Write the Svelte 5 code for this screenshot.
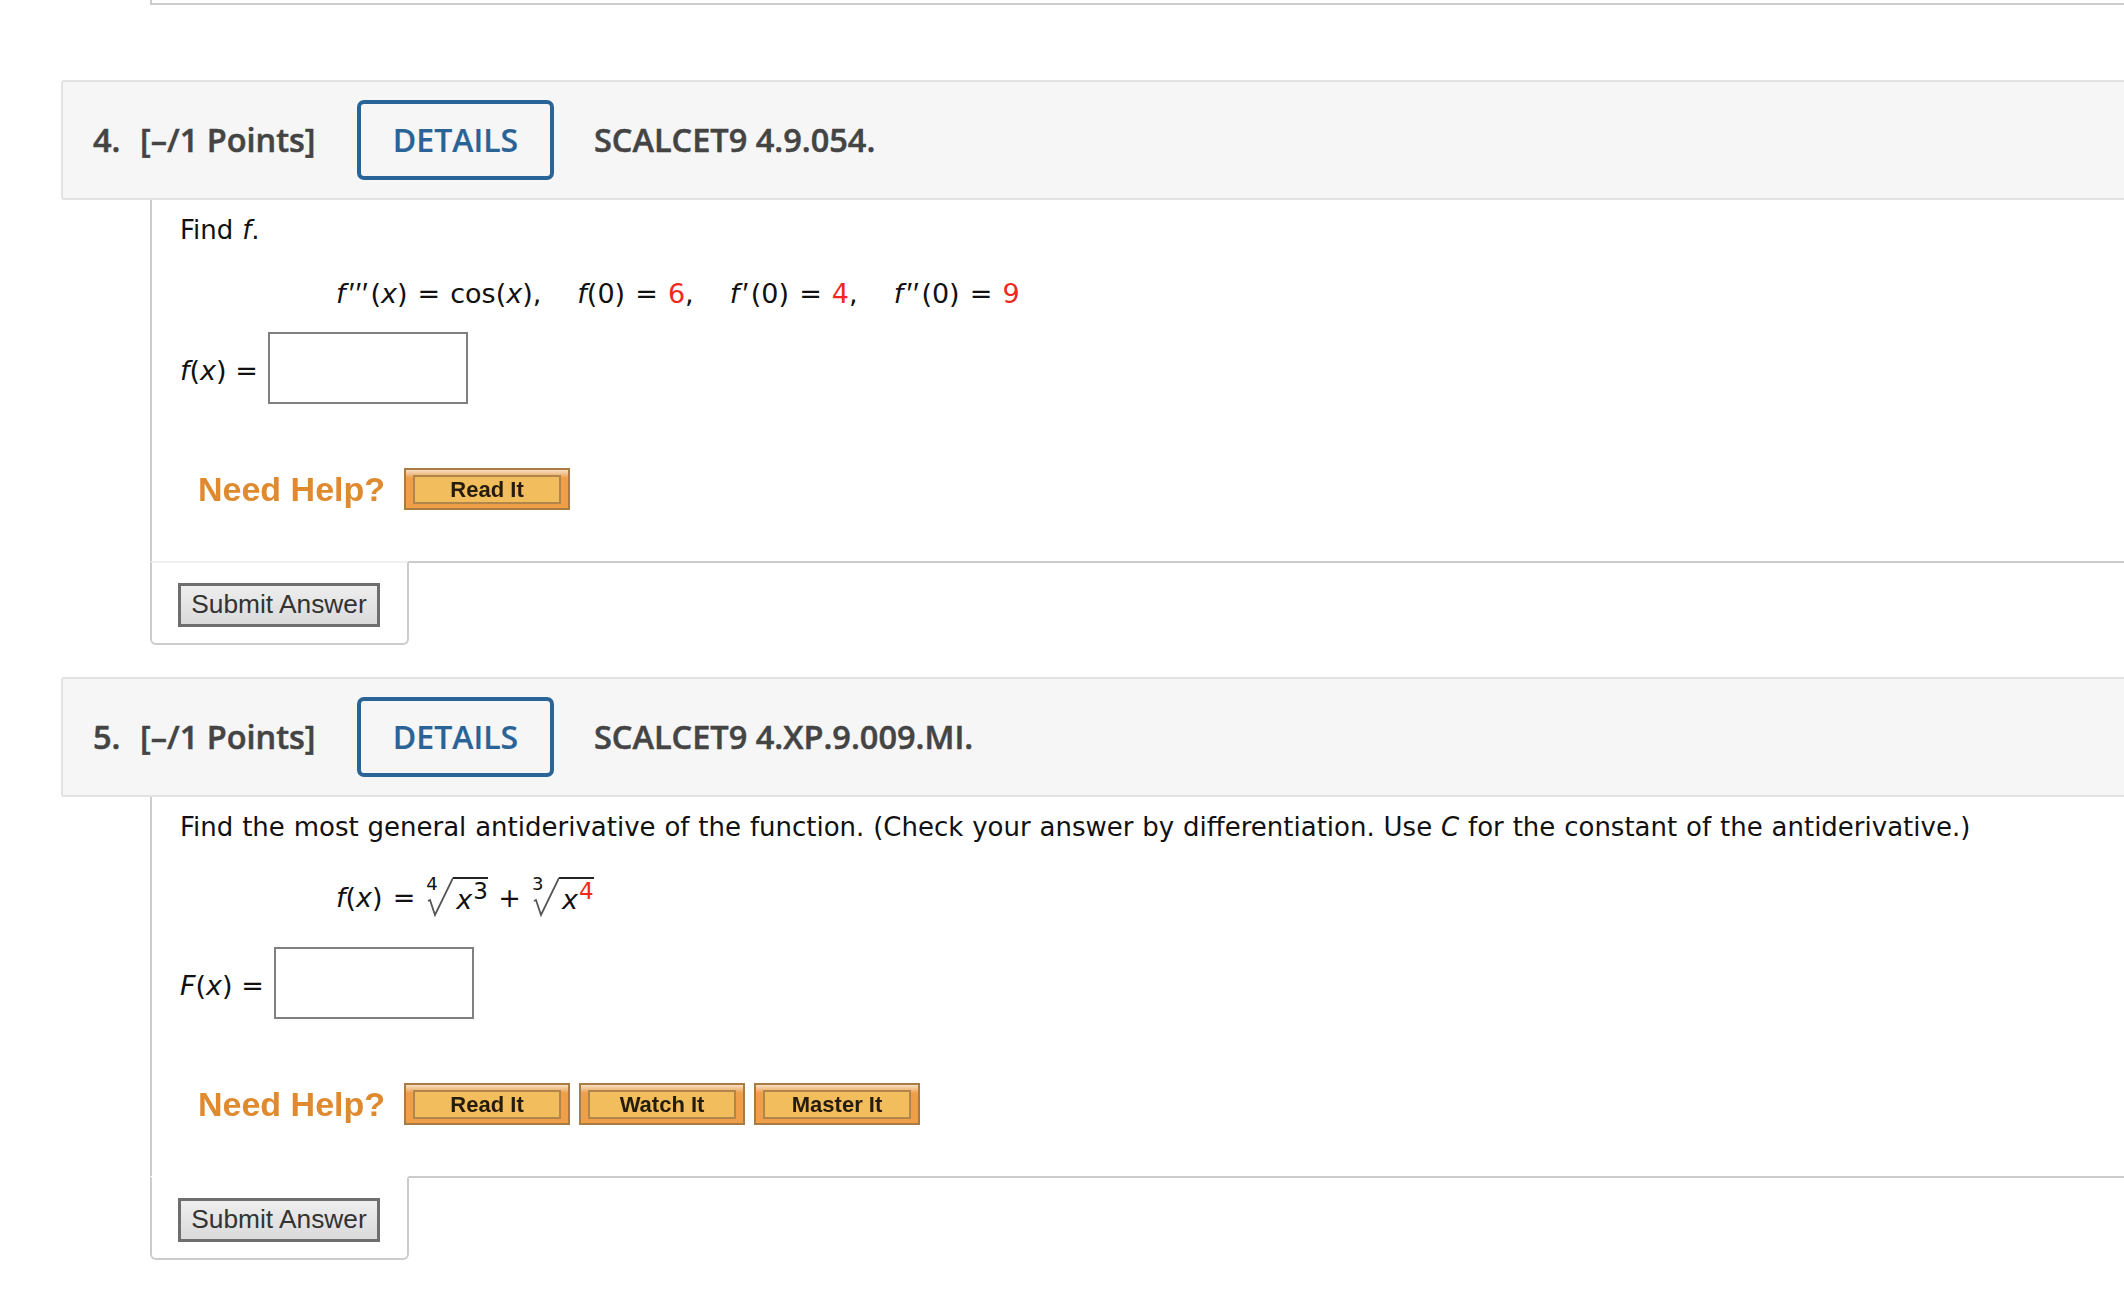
<script>
    const helpFour = ["Read It"];
    const helpFive = ["Read It", "Watch It", "Master It"];
</script>

{#snippet header(num, code)}
    <header class="q-header">
        <span class="num">{num}.</span>
        <span class="points">[–/1 Points]</span>
        <button type="button" class="details">DETAILS</button>
        <span class="code">{code}</span>
    </header>
{/snippet}

{#snippet help(links)}
    <div class="help">
        <span class="need">Need Help?</span>
        {#each links as link}
            <span class="help-btn"><span class="help-inner">{link}</span></span>
        {/each}
    </div>
{/snippet}

{#snippet footer()}
    <div class="footer">
        <div class="tab"><button type="button" class="submit">Submit Answer</button></div>
        <div class="rest"></div>
    </div>
{/snippet}

{#snippet root(index, power, red)}
    <span class="root">
        <span class="index">{index}</span>
        <svg class="radical" width="28" height="40" viewBox="0 0 28 40">
            <path d="M3 24 L5 23 L10 38 L28 1" fill="none" stroke="#555" stroke-width="1.8" />
        </svg>
        <span class="radicand"><i>x</i><sup class:red>{power}</sup></span>
    </span>
{/snippet}

<div class="page">
    <div class="prev"></div>

    <section class="question first">
        {@render header(4, "SCALCET9 4.9.054.")}
        <div class="content">
            <p class="prompt">Find <i>f</i>.</p>
            <div class="math terms">
                <span><i>f<span class="prime">′′′</span></i>(<i>x</i>) = cos(<i>x</i>),</span>
                <span><i>f</i>(0) = <b class="red">6</b>,</span>
                <span><i>f<span class="prime">′</span></i>(0) = <b class="red">4</b>,</span>
                <span><i>f<span class="prime">′′</span></i>(0) = <b class="red">9</b></span>
            </div>
            <div class="answer">
                <span class="label"><i>f</i>(<i>x</i>) = </span>
                <input type="text" />
            </div>
            {@render help(helpFour)}
        </div>
        {@render footer()}
    </section>

    <section class="question second">
        {@render header(5, "SCALCET9 4.XP.9.009.MI.")}
        <div class="content">
            <p class="prompt">Find the most general antiderivative of the function. (Check your answer by differentiation. Use <i>C</i> for the constant of the antiderivative.)</p>
            <div class="math radicals">
                <span class="lhs"><i>f</i>(<i>x</i>) = </span>
                {@render root(4, 3, false)}
                <span class="plus">+</span>
                {@render root(3, 4, true)}
            </div>
            <div class="answer">
                <span class="label"><i>F</i>(<i>x</i>) = </span>
                <input type="text" />
            </div>
            {@render help(helpFive)}
        </div>
        {@render footer()}
    </section>
</div>

<style>
    :global(body) {
        margin: 0;
        background: #fff;
        overflow: hidden;
    }

    .page {
        width: 2124px;
        height: 1298px;
        overflow: hidden;
        font-family: "DejaVu Sans", Verdana, sans-serif;
        color: #111;
    }

    .prev {
        height: 3px;
        margin-left: 150px;
        border-left: 2px solid #ccc;
        border-bottom: 2px solid #ccc;
    }

    .question {
        margin-top: 75px;
    }

    .question.second {
        margin-top: 32px;
    }

    .q-header {
        display: flex;
        align-items: center;
        height: 116px;
        margin-left: 61px;
        margin-right: -10px;
        padding-left: 30px;
        background: #f6f6f6;
        border: 2px solid #e2e2e2;
        border-radius: 3px;
        font-family: "Open Sans", sans-serif;
        font-weight: 600;
        font-size: 32.5px;
        color: #444;
        -webkit-text-stroke: 0.5px #444;
    }

    .num,
    .points,
    .code {
        padding-bottom: 2px;
    }

    .num {
        width: 47px;
    }

    .points {
        width: 217px;
    }

    .details {
        box-sizing: border-box;
        width: 197px;
        height: 80px;
        margin-right: 40px;
        padding: 0 0 2px;
        background: none;
        border: 4px solid #2a6496;
        border-radius: 7px;
        font: inherit;
        font-size: 32px;
        color: #2a6496;
        -webkit-text-stroke: 0.2px #2a6496;
    }

    .content {
        margin-left: 150px;
        padding-left: 28px;
        border-left: 2px solid #ccc;
        height: 361px;
        font-size: 27px;
    }

    .second .content {
        height: 379px;
    }

    .prompt {
        margin: 0;
        padding-top: 14px;
        line-height: 32px;
        font-size: 26px;
        word-spacing: 0.6px;
    }

    .math {
        margin-left: 156px;
        line-height: 32px;
        word-spacing: 1.5px;
    }

    .terms {
        display: flex;
        gap: 36px;
        margin-top: 32px;
    }

    .prime {
        margin: 0 3px 0 2px;
        font-family: "Liberation Sans", Arial, sans-serif;
        font-size: 30px;
        line-height: 0;
        letter-spacing: 1px;
    }

    .radicals {
        display: flex;
        align-items: flex-end;
        gap: 10px;
        margin-top: 34px;
    }

    .lhs {
        margin-bottom: 3px;
    }

    .red {
        color: #f0291c;
        font-weight: normal;
    }

    .answer {
        display: flex;
        align-items: flex-end;
        gap: 10px;
        margin-top: 22px;
    }

    .second .answer {
        margin-top: 30px;
    }

    .label {
        padding-bottom: 17px;
        line-height: 32px;
    }

    input {
        box-sizing: border-box;
        width: 200px;
        height: 72px;
        border: 2px solid #808080;
        background: #fff;
        padding: 0;
    }

    .help {
        display: flex;
        align-items: center;
        gap: 9px;
        margin-top: 64px;
        margin-left: 18px;
    }

    .need {
        margin-right: 10px;
        font-family: "Liberation Sans", Arial, sans-serif;
        font-weight: bold;
        font-size: 34px;
        color: #e08a30;
        filter: blur(0.5px);
    }

    .help-btn {
        box-sizing: border-box;
        display: flex;
        width: 166px;
        height: 42px;
        padding: 5px 7px 4px;
        background: linear-gradient(#f8dfc2 0, #f0c08a 4px, #ee9f48 8px);
        border: 2px solid #a97c44;
        filter: blur(0.3px);
    }

    .help-inner {
        flex: 1;
        display: flex;
        align-items: center;
        justify-content: center;
        background: #f2bd5c;
        border: 2px solid #b0864d;
        font-family: "Liberation Sans", Arial, sans-serif;
        font-weight: bold;
        font-size: 22px;
        color: #241c0c;
    }

    .footer {
        display: flex;
        margin-left: 150px;
    }

    .tab {
        box-sizing: border-box;
        width: 259px;
        height: 84px;
        padding: 20px 0 0 26px;
        border: 2px solid #ccc;
        border-top: 2px solid #f0f0f0;
        border-radius: 0 0 6px 6px;
    }

    .rest {
        flex: 1;
        border-top: 2px solid #ccc;
    }

    .second .tab {
        border-top-color: #fff;
    }

    .submit {
        box-sizing: border-box;
        width: 202px;
        height: 44px;
        padding: 0 0 2px;
        background: linear-gradient(#eee, #dadada);
        border: 3px solid #6e6e6e;
        font-family: "Liberation Sans", Arial, sans-serif;
        font-size: 26.3px;
        color: #333;
    }

    .root {
        display: inline-flex;
        position: relative;
    }

    .index {
        position: absolute;
        left: 1px;
        top: -3px;
        font-size: 18px;
        line-height: 20px;
    }

    .radical {
        display: block;
    }

    .radicand {
        box-sizing: border-box;
        width: 35px;
        height: 40px;
        padding: 5px 0 0 3px;
        border-top: 2px solid #222;
        line-height: 32px;
        word-spacing: 0;
    }

    sup {
        margin-left: 1px;
        font-size: 23px;
        line-height: 0;
        vertical-align: 10px;
    }

    .plus {
        margin-bottom: 3px;
    }
</style>
